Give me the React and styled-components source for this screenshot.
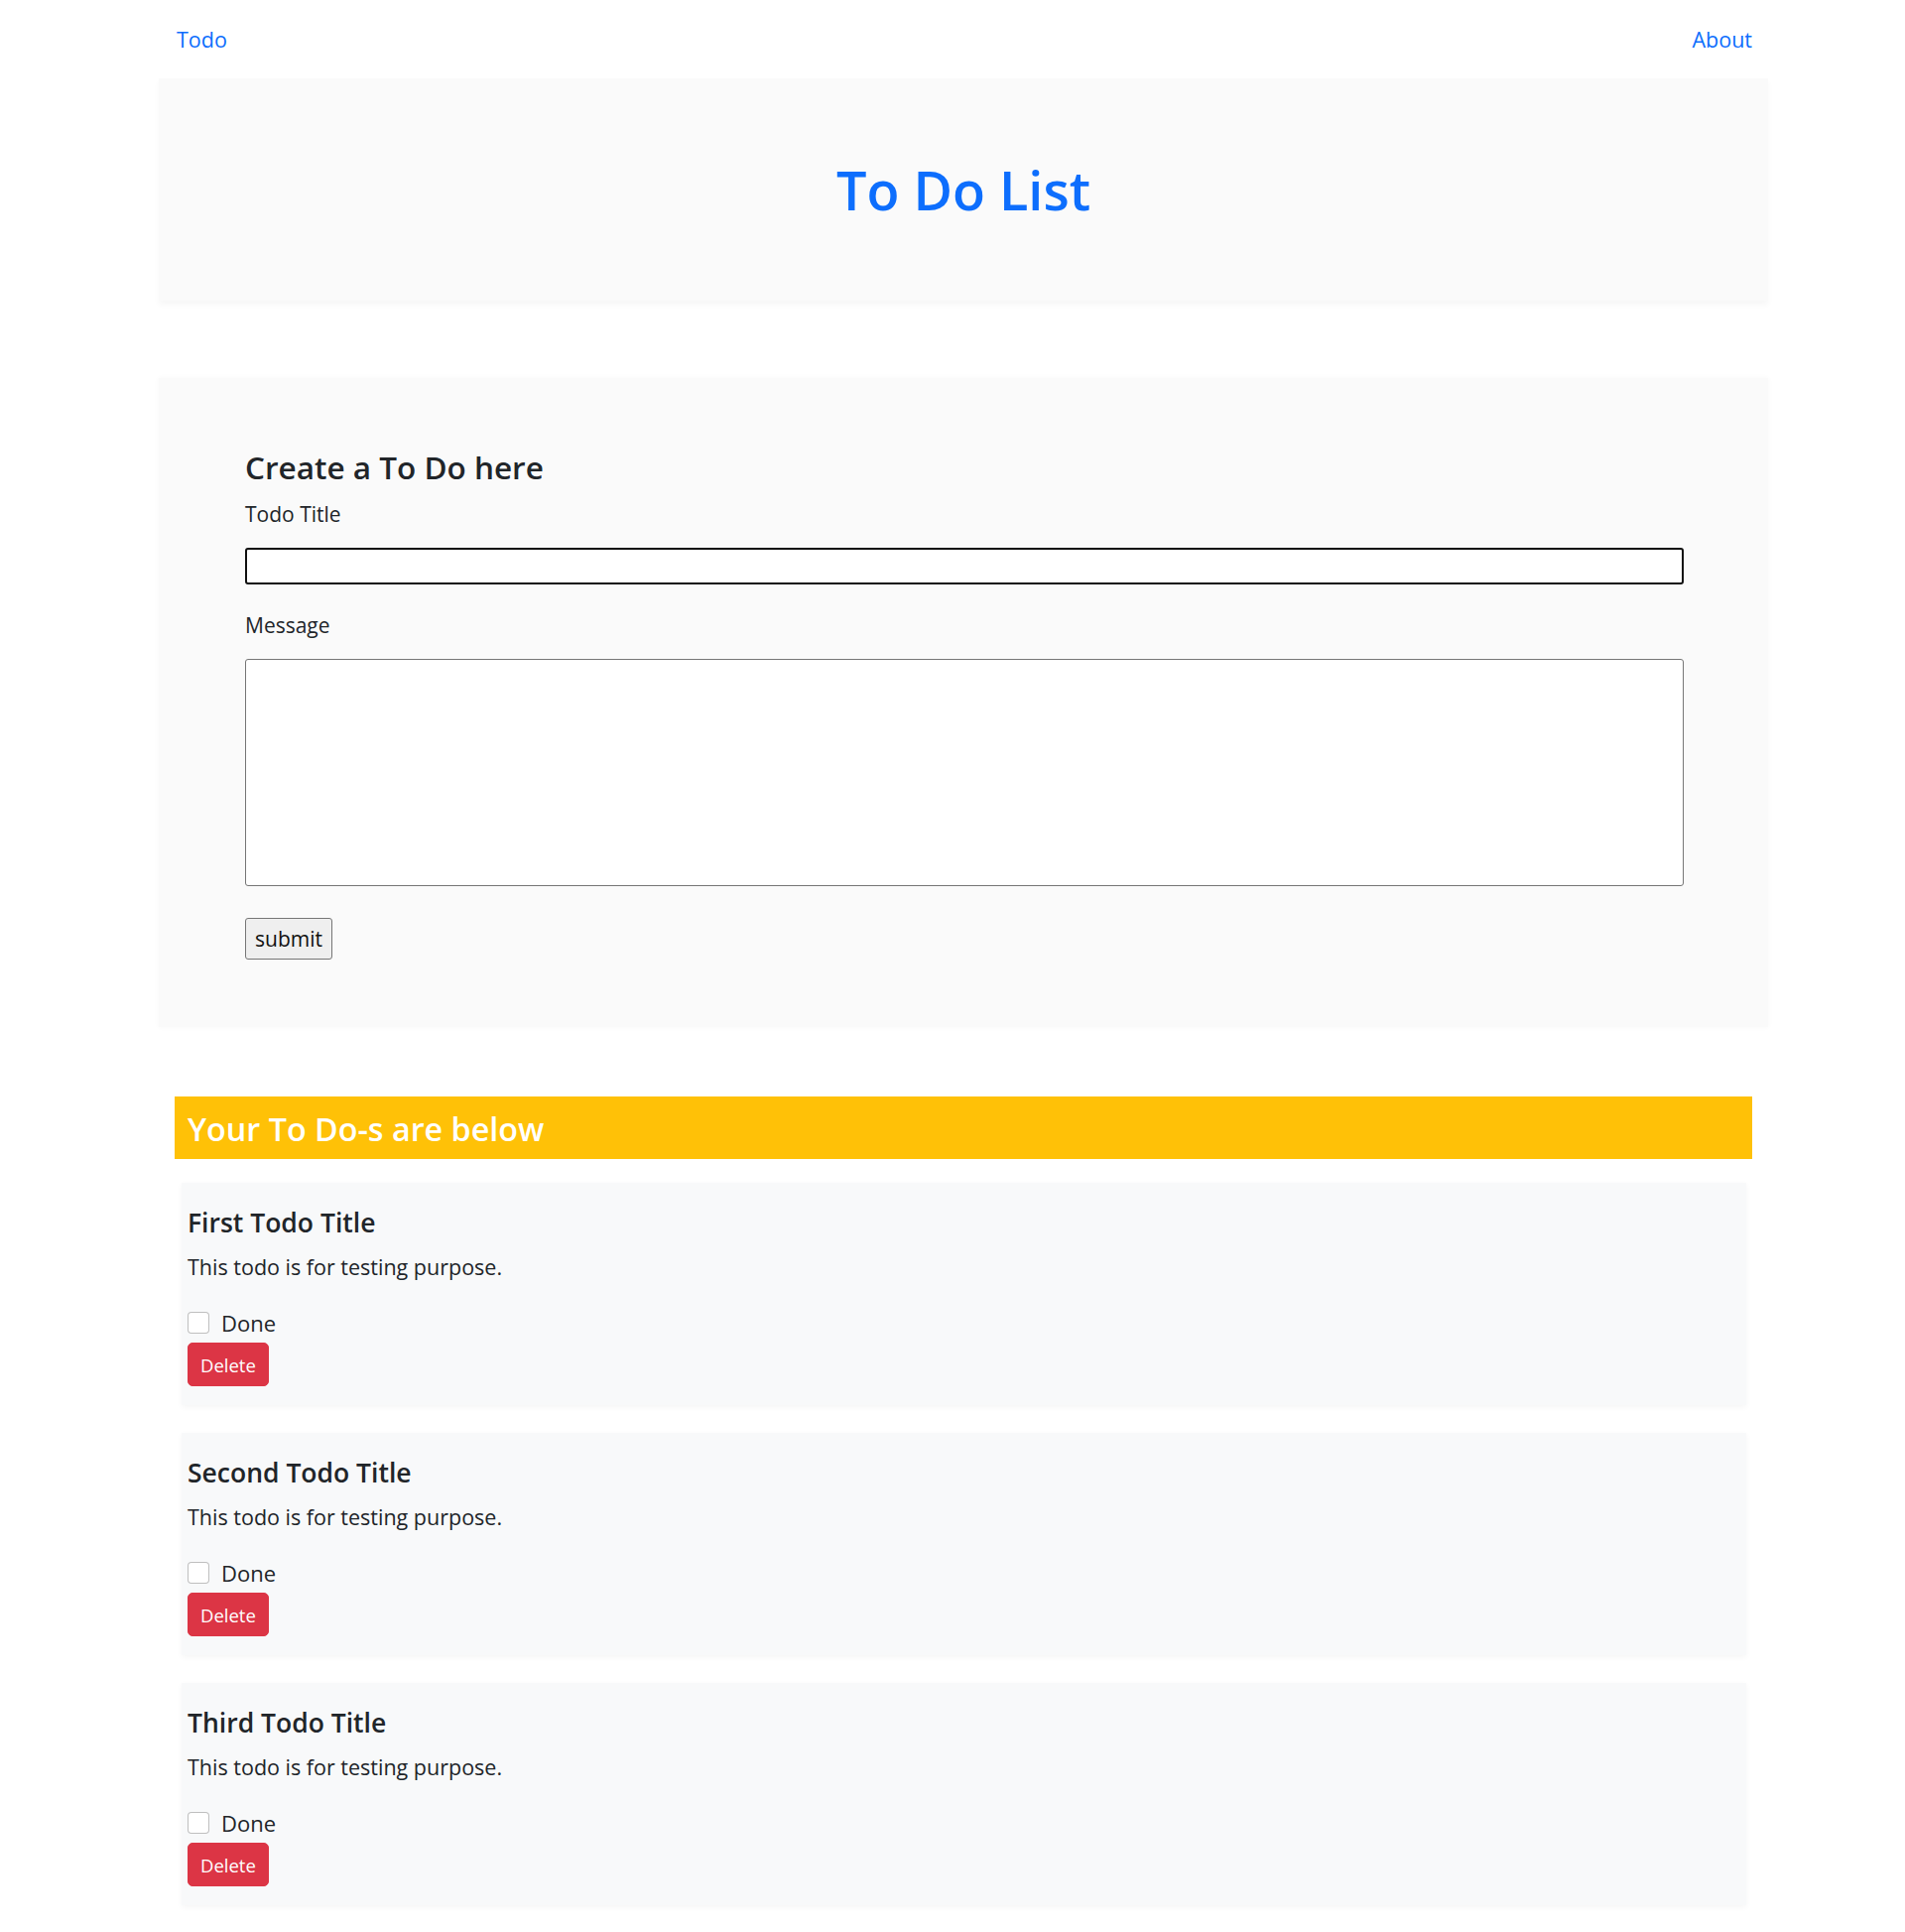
import React from "react";
import styled, { createGlobalStyle } from "styled-components";

const GlobalStyle = createGlobalStyle`
  body {
    margin: 0;
    background: #fff;
    color: #212529;
    font-family: "Open Sans", "Noto Sans", Arial, sans-serif;
  }
  * { box-sizing: border-box; }
`;

const Page = styled.div`
  width: 1622px;
  margin-left: 160px;
  padding-bottom: 24px;
`;

const Nav = styled.nav`
  height: 79px;
  display: flex;
  align-items: center;
  justify-content: space-between;
  padding: 0 16px 0 18px;
`;

const NavLink = styled.a`
  color: #0d6efd;
  font-size: 21.5px;
  text-decoration: none;
  cursor: pointer;
`;

const Jumbotron = styled.header`
  height: 224px;
  display: flex;
  align-items: center;
  justify-content: center;
  background: #fafafa;
  box-shadow: 0 4px 6px rgba(0, 0, 0, 0.035);
`;

const Title = styled.h1`
  margin: 0;
  color: #0d6efd;
  font-size: 54px;
  font-weight: 600;
`;

const FormCard = styled.section`
  margin-top: 78px;
  height: 654px;
  padding: 69px 85px 0 87px;
  background: #fafafa;
  box-shadow: 0 0 6px rgba(0, 0, 0, 0.035);
`;

const FormHeading = styled.h3`
  margin: 0 0 12px;
  font-size: 31.5px;
  line-height: 41px;
  font-weight: 600;
`;

const Label = styled.label`
  display: block;
  font-size: 21px;
  line-height: 30px;
  margin-bottom: ${(p) => p.$gap}px;
`;

const TextInput = styled.input`
  display: block;
  width: 100%;
  height: 37px;
  border: 2px solid #101010;
  border-radius: 3px;
  background: #fff;
  margin-bottom: 26px;
  outline: none;
`;

const TextArea = styled.textarea`
  display: block;
  width: 100%;
  height: 229px;
  border: 1px solid #767676;
  border-radius: 3px;
  background: #fff;
  resize: none;
  margin-bottom: 32px;
`;

const SubmitButton = styled.button`
  height: 42px;
  padding: 0 9px;
  font-family: inherit;
  font-size: 21px;
  color: #111;
  background: #efefef;
  border: 1px solid #767676;
  border-radius: 3px;
`;

const TodoSection = styled.section`
  margin: 70px 16px 0 16px;
`;

const Banner = styled.h3`
  margin: 0;
  height: 63px;
  display: flex;
  align-items: center;
  padding-left: 13px;
  background: #ffc107;
  color: #fff;
  font-size: 32.3px;
  font-weight: 600;
`;

const TodoList = styled.div`
  display: flex;
  flex-direction: column;
  gap: 28px;
  margin: 24px 6px 0 7px;
`;

const TodoCard = styled.article`
  height: 224px;
  padding: 25px 20px 0 6px;
  background: #f8f9fa;
  box-shadow: 0 2px 6px rgba(0, 0, 0, 0.045);
`;

const TodoTitle = styled.h5`
  margin: 0 0 15px;
  font-size: 26.5px;
  line-height: 30px;
  font-weight: 600;
`;

const TodoText = styled.p`
  margin: 0 0 26px;
  font-size: 21.5px;
  line-height: 30px;
`;

const CheckRow = styled.label`
  display: flex;
  align-items: center;
  gap: 12px;
  height: 30px;
  font-size: 22px;
`;

const CheckBox = styled.input.attrs({ type: "checkbox" })`
  appearance: none;
  margin: 0;
  width: 22px;
  height: 22px;
  background: #fff;
  border: 1px solid rgba(0, 0, 0, 0.25);
  border-radius: 4px;
`;

const DeleteButton = styled.button`
  margin-top: 5px;
  height: 44px;
  padding: 0 12px;
  font-family: inherit;
  font-size: 18.5px;
  font-weight: 500;
  color: #fff;
  background: #dc3545;
  border: 1px solid #dc3545;
  border-radius: 5px;
`;

const todos = [
  { sno: 1, title: "First Todo Title", desc: "This todo is for testing purpose." },
  { sno: 2, title: "Second Todo Title", desc: "This todo is for testing purpose." },
  { sno: 3, title: "Third Todo Title", desc: "This todo is for testing purpose." },
];

const App = () => {
  return (
    <>
      <GlobalStyle />
      <Page>
        <Nav>
          <NavLink>Todo</NavLink>
          <NavLink>About</NavLink>
        </Nav>

        <Jumbotron>
          <Title>To Do List</Title>
        </Jumbotron>

        <FormCard>
          <FormHeading>Create a To Do here</FormHeading>
          <Label $gap={19}>Todo Title</Label>
          <TextInput />
          <Label $gap={19}>Message</Label>
          <TextArea />
          <SubmitButton>submit</SubmitButton>
        </FormCard>

        <TodoSection>
          <Banner>Your To Do-s are below</Banner>
          <TodoList>
            {todos.map((todo) => (
              <TodoCard key={todo.sno}>
                <TodoTitle>{todo.title}</TodoTitle>
                <TodoText>{todo.desc}</TodoText>
                <CheckRow>
                  <CheckBox />
                  Done
                </CheckRow>
                <DeleteButton>Delete</DeleteButton>
              </TodoCard>
            ))}
          </TodoList>
        </TodoSection>
      </Page>
    </>
  );
};

export default App;
